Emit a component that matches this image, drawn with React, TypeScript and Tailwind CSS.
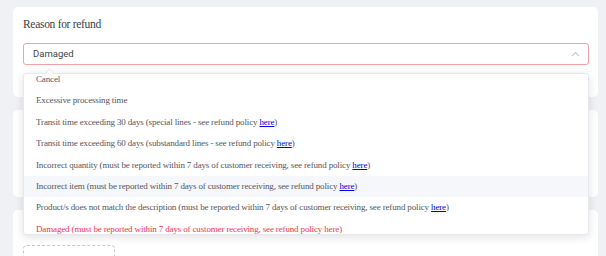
import React from "react";

const serif = { fontFamily: '"Liberation Serif", "DejaVu Serif", serif' };

function Here() {
  return <span className="text-[#0000ee] underline">here</span>;
}

const options: { text: string; link?: boolean; red?: boolean; hover?: boolean }[] = [
  { text: "Cancel" },
  { text: "Excessive processing time" },
  { text: "Transit time exceeding 30 days (special lines - see refund policy ", link: true },
  { text: "Transit time exceeding 60 days (substandard lines - see refund policy ", link: true },
  { text: "Incorrect quantity (must be reported within 7 days of customer receiving, see refund policy ", link: true },
  { text: "Incorrect item (must be reported within 7 days of customer receiving, see refund policy ", link: true, hover: true },
  { text: "Product/s does not match the description (must be reported within 7 days of customer receiving, see refund policy ", link: true },
  { text: "Damaged (must be reported within 7 days of customer receiving, see refund policy here)", red: true },
];

export default function App() {
  return (
    <div className="w-[606px] h-[256px] overflow-hidden bg-[#f0f1f5] pl-[13px] pr-[8px] pt-[7px]">
      <div className="flex flex-col gap-[13px]">
        {/* Card 1 */}
        <div className="relative z-10 h-[90px] rounded-[5px] bg-white px-[10px] pt-[9px]">
          <div className="text-[11.5px] leading-[16px] tracking-[-0.3px] text-[#3a3d4a]" style={serif}>
            Reason for refund
          </div>
          <div className="mt-[11px] flex h-[22px] w-[566px] items-center justify-between rounded-[3px] border-[1.5px] border-[#f3a1a6] pl-[9px] pr-[8px]">
            <span className="text-[9.5px] text-[#444]" style={{ fontFamily: "Roboto, sans-serif" }}>
              Damaged
            </span>
            <svg width="9" height="6" viewBox="0 0 9 6" fill="none">
              <path d="M1 5 L4.5 1.5 L8 5" stroke="#c8cbd2" strokeWidth="1.1" />
            </svg>
          </div>

          {/* Dropdown */}
          <div className="absolute left-[10px] top-[66px] w-[566px] rounded-[3px] border border-[#e6e8ee] bg-white shadow-[0_2px_10px_rgba(0,0,0,0.12)]">
            <div className="absolute -top-[4px] left-[22px] h-[7px] w-[7px] rotate-45 border-l border-t border-[#e6e8ee] bg-white" />
            <div className="relative h-[160px] overflow-hidden">
              <div className="-mt-[5px]">
                {options.map((o, i) => (
                  <div
                    key={i}
                    className={`flex h-[21.4px] items-center pl-[12px] text-[9px] tracking-[-0.15px] whitespace-nowrap ${
                      o.hover ? "bg-[#f5f7fa]" : ""
                    } ${o.red ? "text-[#f0364f]" : "text-[#55555d]"}`}
                    style={serif}
                  >
                    <span>
                      {o.text}
                      {o.link && (
                        <>
                          <Here />)
                        </>
                      )}
                    </span>
                  </div>
                ))}
              </div>
            </div>
          </div>
        </div>

        {/* Card 2 */}
        <div className="h-[87px] rounded-[5px] bg-white" />

        {/* Card 3 */}
        <div className="h-[60px] rounded-[5px] bg-white px-[10px] pt-[35px]">
          <div className="h-[30px] w-[92px] rounded-[4px] border border-dashed border-[#c6c9d0]" />
        </div>
      </div>
    </div>
  );
}
